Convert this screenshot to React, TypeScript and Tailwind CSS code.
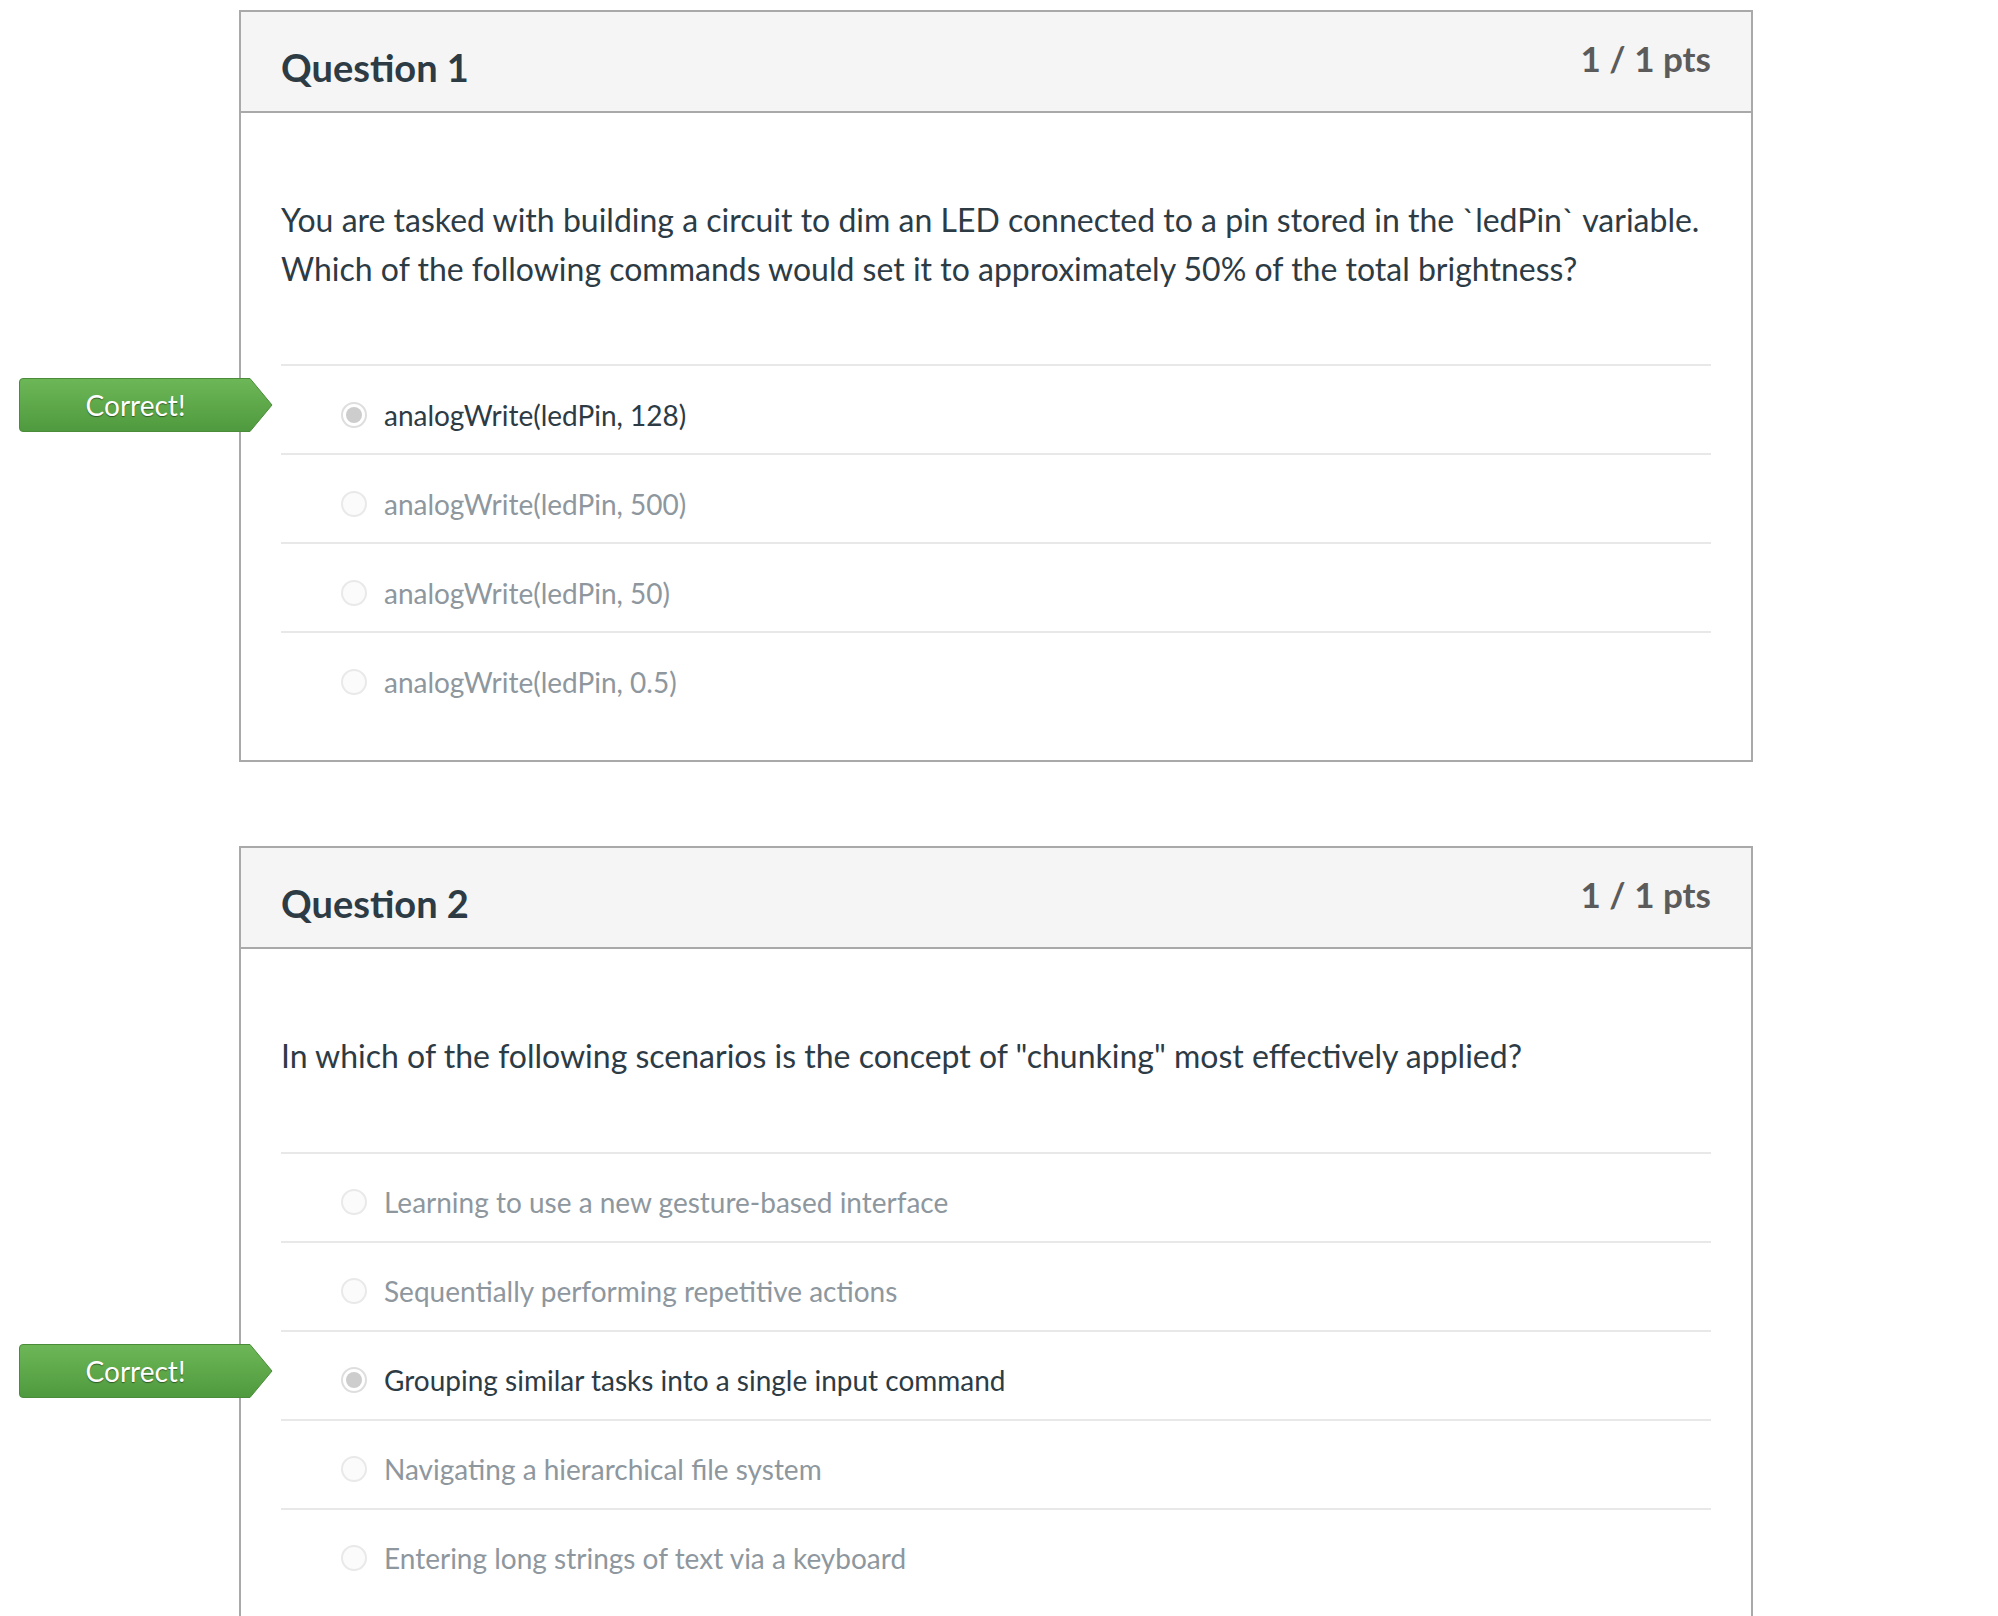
import React from "react";

type Answer = { text: string; correct?: boolean };

type Question = {
  title: string;
  points: string;
  text: string[];
  answers: Answer[];
};

const questions: Question[] = [
  {
    title: "Question 1",
    points: "1 / 1 pts",
    text: [
      "You are tasked with building a circuit to dim an LED connected to a pin stored in the `ledPin` variable.",
      "Which of the following commands would set it to approximately 50% of the total brightness?",
    ],
    answers: [
      { text: "analogWrite(ledPin, 128)", correct: true },
      { text: "analogWrite(ledPin, 500)" },
      { text: "analogWrite(ledPin, 50)" },
      { text: "analogWrite(ledPin, 0.5)" },
    ],
  },
  {
    title: "Question 2",
    points: "1 / 1 pts",
    text: ['In which of the following scenarios is the concept of "chunking" most effectively applied?'],
    answers: [
      { text: "Learning to use a new gesture-based interface" },
      { text: "Sequentially performing repetitive actions" },
      { text: "Grouping similar tasks into a single input command", correct: true },
      { text: "Navigating a hierarchical file system" },
      { text: "Entering long strings of text via a keyboard" },
    ],
  },
];

function CorrectBadge() {
  return (
    <div className="absolute left-[-262px] top-[12px] h-[54px] w-[254px]">
      <svg className="absolute inset-0" width={254} height={54} viewBox="0 0 254 54" fill="none">
        <defs>
          <linearGradient id="correctGreen" x1="0" y1="0" x2="0" y2="1">
            <stop offset="0" stopColor="#6db757" />
            <stop offset="1" stopColor="#4f9a3e" />
          </linearGradient>
        </defs>
        <path
          d="M4 0.5 H231 L253 27 L231 53.5 H4 Q0.5 53.5 0.5 50 V4 Q0.5 0.5 4 0.5 Z"
          fill="url(#correctGreen)"
          stroke="#4b8c3b"
        />
      </svg>
      <div className="relative flex h-full w-[233px] items-center justify-center font-['Lato',sans-serif] text-[28px] leading-none text-white [text-shadow:0_1px_1px_rgba(0,0,0,0.45)]">
        Correct!
      </div>
    </div>
  );
}

function Radio({ checked }: { checked?: boolean }) {
  if (checked) {
    return (
      <span className="flex h-[26px] w-[26px] shrink-0 items-center justify-center rounded-full border-2 border-[#dedede] bg-white">
        <span className="h-[16px] w-[16px] rounded-full bg-[#cdcdcd]" />
      </span>
    );
  }
  return <span className="h-[26px] w-[26px] shrink-0 rounded-full border-2 border-[#e9e9e9] bg-[#fbfbfb]" />;
}

function AnswerRow({ answer }: { answer: Answer }) {
  return (
    <div className="relative flex h-[89px] items-center border-t-2 border-[#e8e8e8] pl-[60px] pt-[10px]">
      {answer.correct && <CorrectBadge />}
      <Radio checked={answer.correct} />
      <span
        className={
          answer.correct
            ? "ml-[17px] font-['Lato',sans-serif] text-[28px] leading-none text-[#2d3b45]"
            : "ml-[17px] font-['Lato',sans-serif] text-[28px] leading-none text-[#8e979e]"
        }
      >
        {answer.text}
      </span>
    </div>
  );
}

function QuestionCard({ q }: { q: Question }) {
  return (
    <div className="w-[1514px] border-2 border-[#a9a9a9] bg-white">
      <div className="flex h-[101px] items-start justify-between border-b-2 border-[#a9a9a9] bg-[#f5f5f5] px-[40px] pt-[26px]">
        <h2 className="mt-[5px] font-['Lato',sans-serif] text-[38px] font-bold leading-[48px] text-[#2d3b45]">
          {q.title}
        </h2>
        <div className="font-['Lato',sans-serif] text-[35px] font-bold leading-[40px] text-[#5b5b5b]">{q.points}</div>
      </div>
      <div className="px-[40px] pb-[40px] pt-[83px]">
        <div className="mb-[71px] font-['Lato',sans-serif] text-[32px] leading-[48.5px] text-[#2d3b45]">
          {q.text.map((line) => (
            <p key={line}>{line}</p>
          ))}
        </div>
        <div>
          {q.answers.map((a) => (
            <AnswerRow key={a.text} answer={a} />
          ))}
        </div>
      </div>
    </div>
  );
}

export default function App() {
  return (
    <div className="min-h-screen bg-white pt-[10px]">
      <div className="ml-[239px] flex flex-col gap-[84px]">
        {questions.map((q) => (
          <QuestionCard key={q.title} q={q} />
        ))}
      </div>
    </div>
  );
}
